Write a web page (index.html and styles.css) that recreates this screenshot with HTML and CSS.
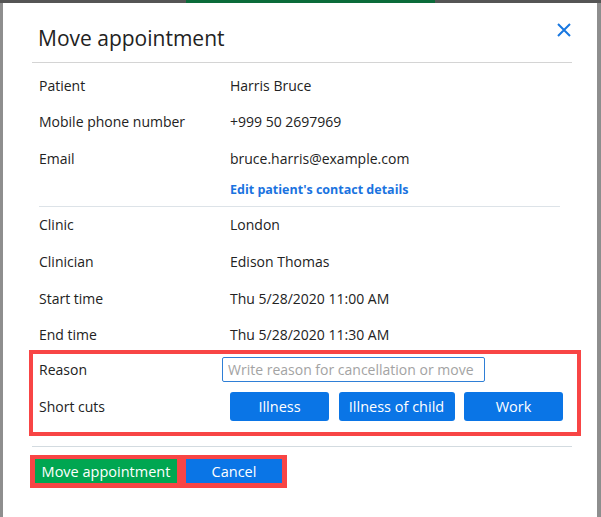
FILE: index.html
```html
<!DOCTYPE html>
<html lang="en">
<head>
    <meta charset="UTF-8">
    <meta name="viewport" content="width=device-width, initial-scale=1.0">
    <title>Move appointment</title>
    <link rel="stylesheet" href="styles.css">
</head>
<body>
    <div class="dialog">
        <div class="dialog-header">
            <h2>Move appointment</h2>
            <button class="close" aria-label="Close">
                <svg width="14" height="14" viewBox="0 0 14 14"><path d="M1 1 L13 13 M13 1 L1 13" stroke="#1877e0" stroke-width="2" fill="none"/></svg>
            </button>
        </div>

        <div class="details">
            <div class="row"><span class="label">Patient</span><span>Harris Bruce</span></div>
            <div class="row"><span class="label">Mobile phone number</span><span>+999 50 2697969</span></div>
            <div class="row"><span class="label">Email</span><span>bruce.harris@example.com</span></div>
            <div class="row link-row"><span class="label"></span><a href="#">Edit patient's contact details</a></div>
        </div>

        <div class="details appointment">
            <div class="row"><span class="label">Clinic</span><span>London</span></div>
            <div class="row"><span class="label">Clinician</span><span>Edison Thomas</span></div>
            <div class="row"><span class="label">Start time</span><span>Thu 5/28/2020 11:00 AM</span></div>
            <div class="row"><span class="label">End time</span><span>Thu 5/28/2020 11:30 AM</span></div>
        </div>

        <div class="reason-box">
            <div class="reason-row">
                <label for="reason">Reason</label>
                <input type="text" id="reason" placeholder="Write reason for cancellation or move">
            </div>
            <div class="reason-row">
                <label>Short cuts</label>
                <div class="shortcuts">
                    <button class="shortcut">Illness</button>
                    <button class="shortcut wide">Illness of child</button>
                    <button class="shortcut">Work</button>
                </div>
            </div>
        </div>

        <div class="footer">
            <div class="actions">
                <button class="btn-move">Move appointment</button>
                <button class="btn-cancel">Cancel</button>
            </div>
        </div>
    </div>
</body>
</html>
```

FILE: styles.css
```css
body {
    margin: 0;
    padding: 3px 4px 0 3px;
    height: 517px;
    box-sizing: border-box;
    overflow: hidden;
    font-family: "Open Sans", Arial, sans-serif;
    color: #222;
    background: linear-gradient(to right, #555 0, #555 186px, #0b6b3a 186px, #0b6b3a 435px, #555 435px) top / 100% 3px no-repeat, #8e8e8e;
}
.dialog { background: #fff; height: 100%; padding: 0 25px 0 29px; }

.dialog-header { display: flex; justify-content: space-between; align-items: flex-start; padding: 20px 0 0 6px; height: 39px; border-bottom: 1px solid #d4d4d4; }
.dialog-header h2 { margin: 0; font-size: 21px; font-weight: 400; line-height: 30px; color: #222; }
.close { background: none; border: none; padding: 0; margin: 0 1px 0 0; width: 14px; height: 14px; cursor: pointer; }
.close svg { display: block; }

.details { margin: 4px 12px 0 7px; font-size: 14px; }
.details.appointment { margin-top: 0; border-top: 1px solid #dde3e8; }
.row { display: flex; height: 36.5px; align-items: center; }
.appointment .row { height: 36.7px; }
.row .label { width: 191px; flex-shrink: 0; }
.link-row { height: 29px; align-items: flex-start; padding-top: 4px; box-sizing: border-box; }
.link-row a { color: #1a73e0; font-weight: 700; font-size: 12.5px; text-decoration: none; }

.reason-box { margin: -3px -9px 0 -3px; border: 4px solid #f84545; padding: 3px 20px 11px 6px; font-size: 14px; }
.reason-row { display: flex; align-items: center; }
.reason-row label { width: 183px; flex-shrink: 0; }
.reason-row + .reason-row { margin-top: 10px; }
.reason-row input { width: 263px; height: 25px; box-sizing: border-box; border: 1px solid #2f7fd6; border-radius: 2px; padding: 0 5px; font-family: inherit; font-size: 14px; color: #222; }
.reason-row input::placeholder { color: #a3a3a3; }
.shortcuts { display: flex; gap: 9.5px; margin-left: 8px; }
.shortcut { height: 29px; min-width: 99px; border: none; border-radius: 3px; background: #0a75e6; color: #fff; font-family: inherit; font-size: 14.5px; padding: 0 8px; white-space: nowrap; cursor: pointer; }
.shortcut.wide { min-width: 116px; }

.footer { margin-top: 10px; border-top: 1px solid #d3dbe0; padding-top: 8px; }
.actions { display: inline-flex; gap: 9px; background: #f84545; padding: 4px 5px 5px 5px; margin-left: -2px; }
.actions button { height: 24px; border: none; color: #fff; font-family: inherit; font-size: 14.5px; padding: 0; white-space: nowrap; cursor: pointer; }
.btn-move { background: #00a651; width: 142px; }
.btn-cancel { background: #0a75e6; width: 96px; }
```
